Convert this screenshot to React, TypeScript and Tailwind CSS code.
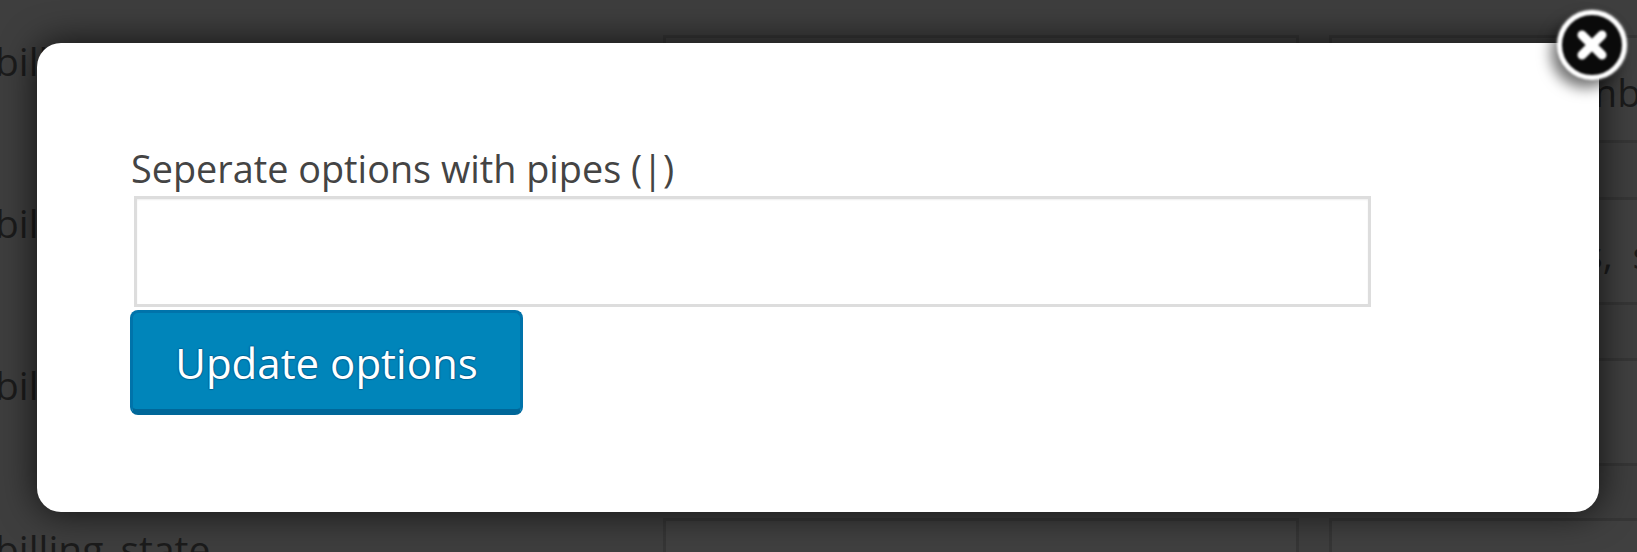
import React from "react";

const rows = [
  { label: "billing_first_name", value: "Phone numb", cell: "pt-[35px]", text: "pt-[0px]", inner: "pt-[28px] pr-[25px]" },
  { label: "billing_last_name", value: "Address,\u2002s", cell: "pt-[54px]", text: "pt-[0px]", inner: "pt-[28px] pr-[15px]" },
  { label: "billing_company", value: "", cell: "pt-[53px]", text: "pt-[1px]", inner: "pt-[28px]" },
  { label: "billing_state", value: "", cell: "pt-[52px]", text: "pt-[5px]", inner: "pt-[28px]" },
];

export default function App() {
  return (
    <div className="relative h-[552px] w-[1637px] overflow-hidden bg-[#3e3e3e] font-['Open_Sans','Noto_Sans',sans-serif]">
      {/* Dimmed settings table behind the modal */}
      <div className="flex flex-col text-[39px] leading-[52px] text-[#1b1b1b]">
        {rows.map((row) => (
          <div key={row.label} className={`flex ${row.cell}`}>
            <div className={`w-[664px] -ml-[5px] mr-[4px] shrink-0 ${row.text}`}>{row.label}</div>
            <div className="h-[108px] w-[636px] shrink-0 border-[3px] border-[#363636] bg-[#404040]" />
            <div className={`ml-[30px] h-[108px] w-[340px] shrink-0 overflow-hidden whitespace-nowrap border-[3px] border-[#363636] bg-[#404040] text-right ${row.inner}`}>
              {row.value}
            </div>
          </div>
        ))}
      </div>

      {/* Modal */}
      <div className="absolute left-[37px] top-[43px] flex h-[469px] w-[1562px] flex-col items-start rounded-[24px] bg-white pl-[94px] pt-[98px] shadow-[0_0_36px_rgba(0,0,0,0.75)]">
        <label className="text-[37.8px] leading-[55px] text-[#444444]">Seperate options with pipes (|)</label>
        <textarea className="ml-[3px] h-[111px] w-[1237px] resize-none border-[3px] border-[#dddddd] bg-white shadow-[inset_0_1px_2px_rgba(0,0,0,0.07)] outline-none" />
        <button className="-ml-[1px] mt-[3px] h-[105px] w-[393px] rounded-[8px] border-[3px] border-b-[6px] border-[#0073aa] border-b-[#006799] bg-[#0085ba] pt-[2px] text-[42px] text-white [text-shadow:0_-1px_1px_#006799,1px_0_1px_#006799,0_1px_1px_#006799,-1px_0_1px_#006799]">
          Update options
        </button>
      </div>

      {/* Close button */}
      <button className="absolute left-[1557px] top-[10px] flex h-[70px] w-[70px] items-center justify-center rounded-full border-[5px] border-white bg-[#0a0a0a] shadow-[-6px_8px_14px_rgba(0,0,0,0.55),0_0_3px_rgba(255,255,255,0.6)] blur-[1px]">
        <svg viewBox="0 0 40 40" className="h-[40px] w-[40px]">
          <path d="M10 10 L30 30 M30 10 L10 30" stroke="#ffffff" strokeWidth="9" strokeLinecap="round" />
        </svg>
      </button>
    </div>
  );
}
